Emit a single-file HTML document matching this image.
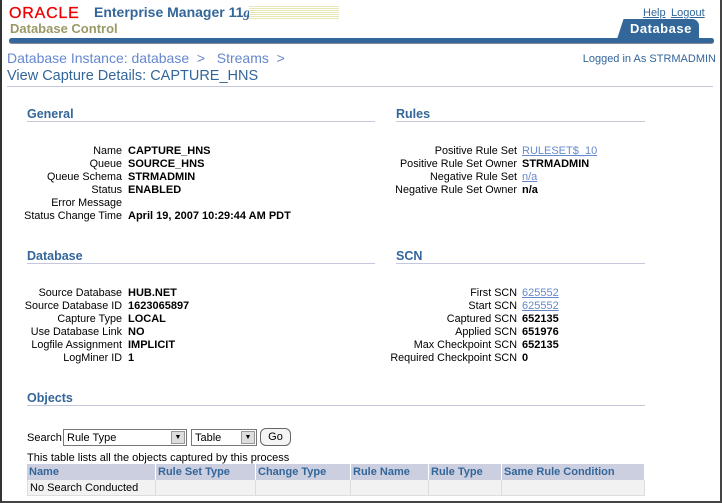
<!DOCTYPE html>
<html><head><style>
*{margin:0;padding:0;box-sizing:border-box}
body{width:722px;height:503px;background:#fff;font-family:"Liberation Sans",sans-serif;font-size:11px;color:#000;position:relative;overflow:hidden}
.a{position:absolute;white-space:nowrap}
.frame{position:absolute;left:0;top:0;width:722px;height:503px;border-left:2px solid #333;border-right:2px solid #444;border-bottom:2px solid #444}
.hd{font-weight:bold;color:#336699;font-size:12.5px}
.ln{position:absolute;height:1px;background:#c5c8da}
.lab{position:absolute;text-align:right;width:200px;line-height:13px;font-size:10.8px}
.val{position:absolute;font-weight:bold;line-height:13px}
.lk{color:#6688cc;text-decoration:underline;font-weight:normal}
.th{position:absolute;top:464px;height:16px;background:#cccfdf;color:#336699;font-weight:bold;padding:2px 2px;line-height:12px;border-right:1px solid #fff}
.td{position:absolute;top:480px;height:16px;background:#f2f2f2;padding:2px 2px;line-height:12px;border-right:1px solid #ddd;border-bottom:1px solid #ddd}
</style></head><body>
<div class="frame"></div>
<div class="a" style="left:9px;top:5px;color:#e00;font-size:16px;letter-spacing:0.8px;-webkit-text-stroke:0.3px #e00">ORACLE</div>
<div class="a" style="left:94px;top:4px;color:#336699;font-weight:bold;font-size:14px">Enterprise Manager 11<i style="font-family:'Liberation Serif',serif">g</i></div>
<div class="a" style="left:249px;top:6px;width:90px;height:13px;background:repeating-linear-gradient(#e6e6b8 0 1px,#fff 1px 2px)"></div>
<div class="a" style="left:10px;top:21px;color:#999966;font-weight:bold;font-size:13px">Database Control</div>
<div class="a" style="left:643px;top:7px;color:#336699;text-decoration:underline">Help</div>
<div class="a" style="left:671px;top:7px;color:#336699;text-decoration:underline">Logout</div>
<div class="a" style="left:617px;top:19px;width:82px;height:20px;background:#336699;border-radius:0 7px 0 0;clip-path:polygon(8% 0,100% 0,100% 100%,0 100%)"></div>
<div class="a" style="left:630px;top:21px;color:#fff;font-weight:bold;font-size:13px;letter-spacing:.5px">Database</div>
<div class="a" style="left:9px;top:38px;width:705px;height:5px;background:#336699;border-radius:3px;box-shadow:0 1px 0 #889"></div>
<div class="a" style="left:7px;top:50px;color:#6688cc;font-size:14px">Database Instance: database &nbsp;&gt; &nbsp; Streams &nbsp;&gt;</div>
<div class="a" style="right:6px;top:53px;color:#336699">Logged in As STRMADMIN</div>
<div class="a" style="left:7px;top:68px;color:#336699;font-size:14.5px">View Capture Details: CAPTURE_HNS</div>
<div class="ln" style="left:7px;top:86px;width:706px"></div>

<div class="a hd" style="left:27px;top:107px">General</div><div class="ln" style="left:27px;top:121px;width:348px"></div>
<div class="a hd" style="left:396px;top:107px">Rules</div><div class="ln" style="left:396px;top:121px;width:249px"></div>
<div class="lab" style="left:-78px;top:145px">Name<br>Queue<br>Queue Schema<br>Status<br>Error Message<br>Status Change Time</div>
<div class="val" style="left:128px;top:145px">CAPTURE_HNS<br>SOURCE_HNS<br>STRMADMIN<br>ENABLED<br>&nbsp;<br>April 19, 2007 10:29:44 AM PDT</div>
<div class="lab" style="left:317px;top:145px">Positive Rule Set<br>Positive Rule Set Owner<br>Negative Rule Set<br>Negative Rule Set Owner</div>
<div class="val" style="left:522px;top:145px"><span class="lk">RULESET$_10</span><br>STRMADMIN<br><span class="lk">n/a</span><br>n/a</div>

<div class="a hd" style="left:27px;top:249px">Database</div><div class="ln" style="left:27px;top:263px;width:348px"></div>
<div class="a hd" style="left:396px;top:249px">SCN</div><div class="ln" style="left:396px;top:263px;width:249px"></div>
<div class="lab" style="left:-78px;top:287px">Source Database<br>Source Database ID<br>Capture Type<br>Use Database Link<br>Logfile Assignment<br>LogMiner ID</div>
<div class="val" style="left:128px;top:287px">HUB.NET<br>1623065897<br>LOCAL<br>NO<br>IMPLICIT<br>1</div>
<div class="lab" style="left:317px;top:287px">First SCN<br>Start SCN<br>Captured SCN<br>Applied SCN<br>Max Checkpoint SCN<br>Required Checkpoint SCN</div>
<div class="val" style="left:522px;top:287px"><span class="lk">625552</span><br><span class="lk">625552</span><br>652135<br>651976<br>652135<br>0</div>

<div class="a hd" style="left:27px;top:391px">Objects</div><div class="ln" style="left:27px;top:405px;width:618px"></div>
<div class="a" style="left:27px;top:432px">Search</div>
<div class="a" style="left:63px;top:429px;width:124px;height:17px;border:1px solid #777;background:#fff;padding:2px 3px">Rule Type</div>
<div class="a" style="left:171px;top:431px;width:14px;height:13px;background:#ddd;border:1px solid #999;font-size:7px;text-align:center;line-height:12px">▼</div>
<div class="a" style="left:191px;top:429px;width:66px;height:17px;border:1px solid #777;background:#fff;padding:2px 3px">Table</div>
<div class="a" style="left:241px;top:431px;width:14px;height:13px;background:#ddd;border:1px solid #999;font-size:7px;text-align:center;line-height:12px">▼</div>
<div class="a" style="left:260px;top:428px;width:31px;height:18px;border:1px solid #666;border-radius:6px;background:#f4f4f4;text-align:center;line-height:16px">Go</div>
<div class="a" style="left:27px;top:452px">This table lists all the objects captured by this process</div>
<div class="th" style="left:27px;width:129px">Name</div>
<div class="th" style="left:156px;width:100px">Rule Set Type</div>
<div class="th" style="left:256px;width:95px">Change Type</div>
<div class="th" style="left:351px;width:78px">Rule Name</div>
<div class="th" style="left:429px;width:73px">Rule Type</div>
<div class="th" style="left:502px;width:143px">Same Rule Condition</div>
<div class="td" style="left:27px;width:129px;border-left:1px solid #ddd">No Search Conducted</div>
<div class="td" style="left:156px;width:100px"></div>
<div class="td" style="left:256px;width:95px"></div>
<div class="td" style="left:351px;width:78px"></div>
<div class="td" style="left:429px;width:73px"></div>
<div class="td" style="left:502px;width:143px"></div>
</body></html>
